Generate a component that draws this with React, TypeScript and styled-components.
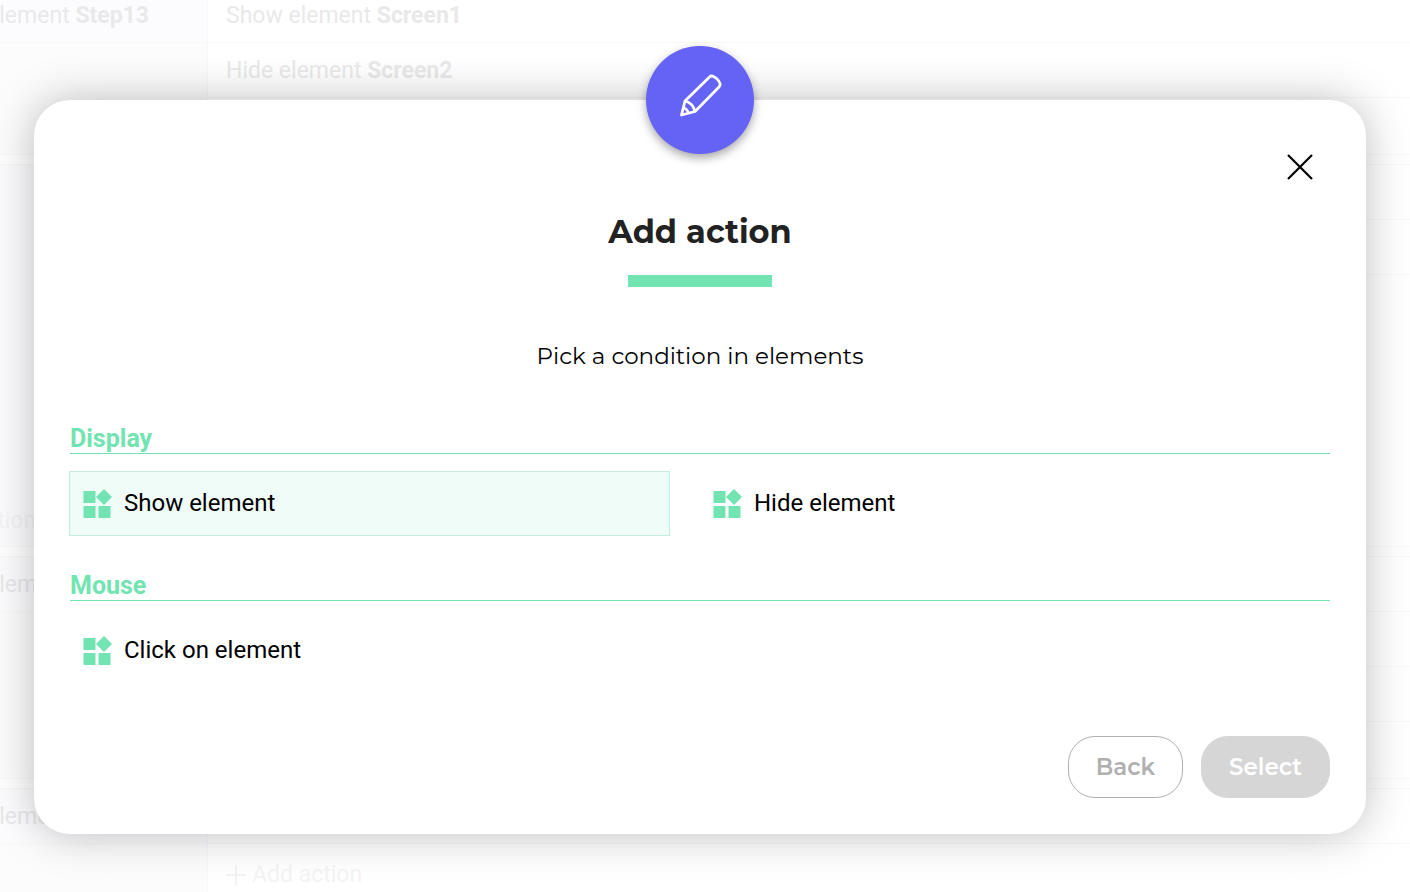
import React, { useState } from "react";
import styled, { createGlobalStyle } from "styled-components";

const GlobalStyle = createGlobalStyle`
  *, *::before, *::after { box-sizing: border-box; }
  body { margin: 0; background: #fff; font-family: Roboto, sans-serif; font-size: 24px; }
  h1, h2, p { margin: 0; }
`;

const heading = `Montserrat, Inter, sans-serif`;

const Page = styled.div`
  position: relative;
  min-height: 100vh;
  overflow: hidden;
`;

/* Faded rule list that stays behind the dialog */
const Backdrop = styled.div`
  position: absolute;
  inset: 0;
  overflow: hidden;
  font-size: 23px;
`;

const Rules = styled.div`
  display: flex;
  flex-direction: column;
  gap: 9px;
  margin: -13px 0 0 -118px;
`;

const Rule = styled.section`
  display: grid;
  grid-template-columns: 326px 1fr;
  border-top: 1px solid #f8f8fa;
  border-bottom: 1px solid #f8f8fa;
`;

const Triggers = styled.div<{ $tall?: boolean }>`
  display: flex;
  flex-direction: column;
  justify-content: ${(p) => (p.$tall ? "flex-end" : "flex-start")};
  min-height: ${(p) => (p.$tall ? "381px" : "0")};
  border-right: 1px solid #f8f8fa;
  background: ${(p) => (p.$tall ? "#fcfcff" : "#fcfcfc")};
`;

const Line = styled.div<{ $tint?: boolean }>`
  display: flex;
  align-items: center;
  height: 55px;
  padding: 0 18px;
  white-space: pre;
  border-bottom: 1px solid #f8f8fa;
  background: ${(p) => (p.$tint ? "#fcfcff" : "transparent")};
  color: #e9e9e9;
  b { font-weight: 700; }
`;

const LastLine = styled.div`
  display: flex;
  align-items: center;
  gap: 6px;
  height: 56px;
  padding: 5px 18px 0;
  color: #f4f4f4;
`;

const Overlay = styled.div`
  position: relative;
  display: grid;
  padding: 100px 44px 58px 34px;
`;

const Dialog = styled.div`
  position: relative;
  display: flex;
  flex-direction: column;
  padding: 108px 36px 36px;
  border-radius: 36px;
  background: #fff;
  box-shadow: 0 0 44px rgba(0, 0, 0, 0.26);
`;

const Badge = styled.div`
  position: absolute;
  top: -54px;
  left: 50%;
  display: grid;
  place-items: center;
  width: 108px;
  height: 108px;
  margin-left: -54px;
  padding-bottom: 8px;
  border-radius: 50%;
  background: #6563f6;
  box-shadow: 0 4px 10px rgba(0, 0, 0, 0.35);
`;

const CloseButton = styled.button`
  position: absolute;
  top: 49px;
  right: 48px;
  display: grid;
  place-items: center;
  width: 36px;
  height: 36px;
  padding: 0;
  border: 0;
  background: none;
  cursor: pointer;
`;

const Title = styled.h1`
  font: 700 32px/48px ${heading};
  color: #222;
  text-align: center;
`;

const Accent = styled.div`
  width: 144px;
  height: 12px;
  margin: 19px auto 0;
  background: #71e4b1;
`;

const Lead = styled.p`
  margin: 51px 0 48px;
  font: 400 23px/36px ${heading};
  color: #000;
  text-align: center;
`;

const Group = styled.section`
  margin-bottom: 33px;
`;

const GroupTitle = styled.h2`
  height: 32px;
  margin-bottom: 17px;
  border-bottom: 1px solid #71e4b1;
  font-size: 25px;
  line-height: 34px;
  font-weight: 700;
  color: #71e4b1;
`;

const Options = styled.div`
  display: grid;
  grid-template-columns: 1fr 1fr;
  margin: 0 1px 0 -1px;
`;

const Option = styled.button`
  display: flex;
  align-items: center;
  gap: 11px;
  height: 65px;
  margin-right: 29px;
  padding: 0 13px 2px;
  border: 1px solid transparent;
  background: none;
  font: 400 24px/32px Roboto, sans-serif;
  color: #000;
  text-align: left;
  cursor: pointer;
  &[aria-pressed="true"] {
    border-color: #c0f0dc;
    background: #f0fcf7;
  }
`;

const Footer = styled.footer`
  display: flex;
  justify-content: flex-end;
  gap: 18px;
  margin-top: 20px;
`;

const Action = styled.button<{ $filled?: boolean }>`
  height: 62px;
  padding: 0 27px;
  border: 1px solid ${(p) => (p.$filled ? "#d6d6d6" : "#b0b0b0")};
  border-radius: 27px;
  background: ${(p) => (p.$filled ? "#d6d6d6" : "#fff")};
  color: ${(p) => (p.$filled ? "#fff" : "#b0b0b0")};
  font: 600 23px/32px ${heading};
`;

const PencilIcon = () => (
  <svg width="44" height="44" viewBox="0 0 44 44" fill="none" stroke="#fff" strokeWidth="2.8" strokeLinejoin="round" aria-hidden="true">
    <path d="M3.5 41 7 27 31.500 3Q33 1.500 35 2.300Q40 4.500 42 9.500Q42.600 11.500 41 13L17 37.500Z" />
    <path d="M7 27Q15 29 17 37.500M5.500 34Q9.500 35 10.500 39.500" />
  </svg>
);

const WidgetsIcon = () => (
  <svg width="30" height="30" viewBox="0 0 30 30" fill="#71e4b1" aria-hidden="true">
    <path d="M0.500 3h12v12h-12zM0.500 18h12v12h-12zM15.500 18h12v12h-12zM21 1l8 8-8 8-8-8z" />
  </svg>
);

const PlusIcon = () => (
  <svg width="20" height="20" viewBox="0 0 20 20" stroke="#f0f0f0" strokeWidth="1.500" aria-hidden="true">
    <path d="M0 10h20M10 0v20" />
  </svg>
);

const AddLine = () => (
  <LastLine>
    <PlusIcon />
    Add action
  </LastLine>
);

const groups = [
  { name: "Display", options: ["Show element", "Hide element"] },
  { name: "Mouse", options: ["Click on element"] },
];

export default function App() {
  const [picked, setPicked] = useState("Show element");
  return (
    <>
      <GlobalStyle />
      <Page>
        <Backdrop aria-hidden="true">
          <Rules>
            <Rule>
              <Triggers>
                <Line $tint><span>Click on element <b>Step13</b></span></Line>
              </Triggers>
              <div>
                <Line><span>Show element <b>Screen1</b></span></Line>
                <Line><span>Hide element <b>Screen2</b></span></Line>
                <LastLine />
              </div>
            </Rule>
            <Rule>
              <Triggers $tall>
                <AddLine />
              </Triggers>
              <div>
                <Line />
                <Line />
              </div>
            </Rule>
            <Rule>
              <Triggers>
                <Line $tint>Click on element</Line>
              </Triggers>
              <div>
                <Line />
                <Line />
                <Line />
                <LastLine />
              </div>
            </Rule>
            <Rule>
              <Triggers>
                <Line $tint>Click on element</Line>
              </Triggers>
              <div>
                <Line />
                <AddLine />
              </div>
            </Rule>
          </Rules>
        </Backdrop>
        <Overlay>
          <Dialog role="dialog" aria-labelledby="dialog-title">
            <Badge><PencilIcon /></Badge>
            <CloseButton type="button" aria-label="Close">
              <svg width="26" height="26" viewBox="0 0 26 26" stroke="#000" strokeWidth="2.2" aria-hidden="true">
                <path d="M1 1l24 24M25 1 1 25" />
              </svg>
            </CloseButton>
            <Title id="dialog-title">Add action</Title>
            <Accent />
            <Lead>Pick a condition in elements</Lead>
            {groups.map((g) => (
              <Group key={g.name}>
                <GroupTitle>{g.name}</GroupTitle>
                <Options>
                  {g.options.map((o) => (
                    <Option key={o} type="button" aria-pressed={picked === o} onClick={() => setPicked(o)}>
                      <WidgetsIcon />
                      {o}
                    </Option>
                  ))}
                </Options>
              </Group>
            ))}
            <Footer>
              <Action type="button">Back</Action>
              <Action type="button" $filled>Select</Action>
            </Footer>
          </Dialog>
        </Overlay>
      </Page>
    </>
  );
}
